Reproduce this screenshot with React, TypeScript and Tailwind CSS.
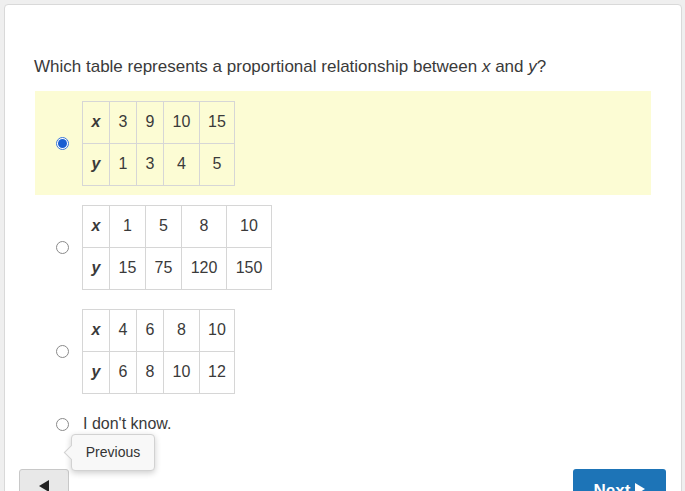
import React from 'react';

type Row = { label: string; values: string[] };

const options: { rows: Row[]; widths: number[] }[] = [
  {
    rows: [
      { label: 'x', values: ['3', '9', '10', '15'] },
      { label: 'y', values: ['1', '3', '4', '5'] },
    ],
    widths: [27, 27, 36, 35],
  },
  {
    rows: [
      { label: 'x', values: ['1', '5', '8', '10'] },
      { label: 'y', values: ['15', '75', '120', '150'] },
    ],
    widths: [36, 36, 45, 45],
  },
  {
    rows: [
      { label: 'x', values: ['4', '6', '8', '10'] },
      { label: 'y', values: ['6', '8', '10', '12'] },
    ],
    widths: [27, 27, 36, 35],
  },
];

function Radio({ checked }: { checked?: boolean }) {
  if (checked) {
    return (
      <span className="flex h-[13px] w-[13px] shrink-0 items-center justify-center rounded-full border border-[#3b78d8] bg-white">
        <span className="h-[9px] w-[9px] rounded-full bg-[#1a5fd1]" />
      </span>
    );
  }
  return <span className="h-[13px] w-[13px] shrink-0 rounded-full border border-[#8a8a8a] bg-white" />;
}

function ValueTable({ rows, widths }: { rows: Row[]; widths: number[] }) {
  return (
    <table className="border-collapse text-[16px] text-[#3a3a3a]">
      <tbody>
        {rows.map((row) => (
          <tr key={row.label} className="h-[42px]">
            <td className="w-[27px] border border-[#d6d6d6] text-center font-bold italic">{row.label}</td>
            {row.values.map((v, i) => (
              <td key={i} style={{ width: widths[i] }} className="border border-[#d6d6d6] text-center">
                {v}
              </td>
            ))}
          </tr>
        ))}
      </tbody>
    </table>
  );
}

export default function App() {
  return (
    <div
      className="relative h-[491px] w-[685px] overflow-hidden bg-[#efefef] pl-[4px] pt-[4px]"
      style={{ fontFamily: '"Liberation Sans", Arial, sans-serif' }}
    >
      <div className="h-[520px] w-[678px] rounded-[4px] border border-[#d9d9d9] bg-white">
        {/* Question */}
        <p className="pl-[29px] pt-[50px] text-[17px] leading-[24px] text-[#3a3a3a]">
          Which table represents a proportional relationship between <i>x</i> and <i>y</i>?
        </p>

        {/* Choices */}
        <div className="mx-[30px] mt-[12px] flex flex-col">
          {options.map((opt, idx) => (
            <div
              key={idx}
              className={`flex h-[104px] items-center pl-[21px] ${idx === 0 ? 'bg-[#fcfcd4]' : ''}`}
            >
              <Radio checked={idx === 0} />
              <div className="ml-[13px]">
                <ValueTable rows={opt.rows} widths={opt.widths} />
              </div>
            </div>
          ))}
          <div className="flex h-[42px] items-center pl-[21px]">
            <Radio />
            <span className="ml-[14px] text-[16px] text-[#3a3a3a]">I don't know.</span>
          </div>
        </div>

        {/* Navigation */}
        <div className="mt-[24px] flex justify-between pl-[14px] pr-[15px]">
          <button className="flex h-[40px] w-[50px] items-start justify-center rounded-[3px] border border-[#c8c8c8] bg-[#e8e8e8] pt-[10px]">
            <svg width="10" height="12" viewBox="0 0 10 12">
              <path d="M0 6 L10 0 L10 12 Z" fill="#222" />
            </svg>
          </button>
          <button className="flex h-[40px] w-[93px] items-start justify-center gap-[5px] rounded-[3px] bg-[#1d74b7] pt-[9px] text-[17px] font-bold text-white">
            Next
            <svg width="10" height="12" viewBox="0 0 10 12" className="mt-[5px]">
              <path d="M0 0 L10 6 L0 12 Z" fill="#fff" />
            </svg>
          </button>
        </div>
      </div>

      {/* Tooltip over the previous button */}
      <div className="absolute left-[71px] top-[434px] flex h-[37px] w-[84px] items-center justify-center rounded-[4px] border border-[#d2d2d2] bg-[#f8f8f8] text-[14px] text-[#333] shadow-[0_2px_6px_rgba(0,0,0,0.2)]">
        Previous
        <span className="absolute left-[-6px] top-[12px] h-[11px] w-[11px] rotate-45 border-b border-l border-[#d2d2d2] bg-[#f8f8f8]" />
      </div>
    </div>
  );
}
